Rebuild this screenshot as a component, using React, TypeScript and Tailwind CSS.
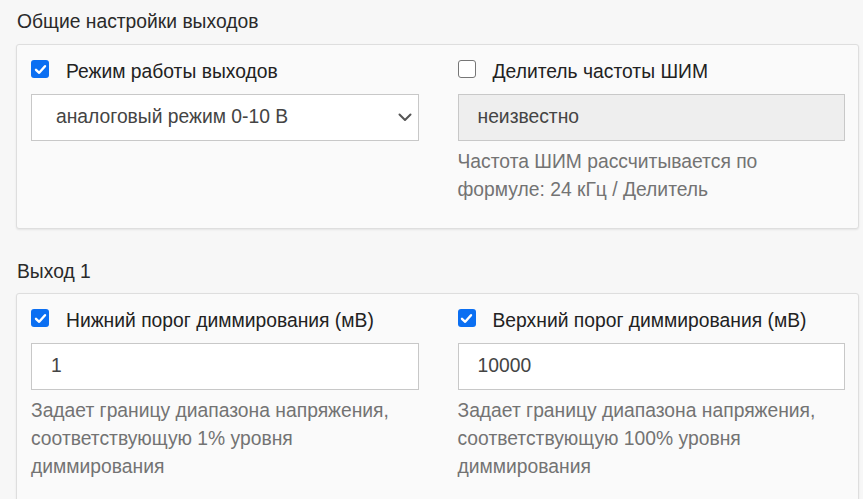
import React from "react";

function Check({ checked }: { checked: boolean }) {
  if (checked) {
    return (
      <div className="w-[18px] h-[18px] mt-[1px] rounded-[3px] bg-[#0b6ff2] flex items-center justify-center shrink-0">
        <svg width="13" height="13" viewBox="0 0 13 13" fill="none">
          <path d="M2 6.8 L5.2 9.8 L11 3.2" stroke="#fff" strokeWidth="2.4" strokeLinecap="round" strokeLinejoin="round" />
        </svg>
      </div>
    );
  }
  return <div className="w-[18px] h-[18px] mt-[1px] rounded-[3px] border-[1.5px] border-[#767676] bg-white shrink-0" />;
}

function Field({
  checked,
  label,
  children,
  help,
}: {
  checked: boolean;
  label: string;
  children: React.ReactNode;
  help?: React.ReactNode;
}) {
  return (
    <div className="flex flex-col">
      <div className="flex items-start h-[27px]">
        <Check checked={checked} />
        <span className="ml-[17px] text-[#222] leading-[27px] -mt-[1px] whitespace-nowrap">{label}</span>
      </div>
      <div className="mt-[8px]">{children}</div>
      {help && <div className="mt-[7px] text-[#737373] leading-[28px] whitespace-nowrap">{help}</div>}
    </div>
  );
}

function TextBox({ value, disabled }: { value: string; disabled?: boolean }) {
  return (
    <div
      className={
        "h-[47px] border border-[#c8c8c8] flex items-center pl-[19px] text-[#444] " +
        (disabled ? "bg-[#eeeeee]" : "bg-white")
      }
    >
      {value}
    </div>
  );
}

function SelectBox({ value }: { value: string }) {
  return (
    <div className="h-[47px] border border-[#c8c8c8] bg-white flex items-center pl-[24px] pr-[6px] text-[#444]">
      <span className="flex-1 whitespace-nowrap">{value}</span>
      <svg width="14" height="9" viewBox="0 0 14 9" fill="none">
        <path d="M1.5 1.5 L7 7 L12.5 1.5" stroke="#555" strokeWidth="2" strokeLinecap="round" strokeLinejoin="round" />
      </svg>
    </div>
  );
}

export default function App() {
  return (
    <div
      className="w-[863px] h-[499px] overflow-hidden bg-[#f7f7f7] pl-[16px] text-[19.3px]"
      style={{ fontFamily: '"Liberation Sans", Arial, sans-serif' }}
    >
      <div className="pt-[8px] leading-[27px] text-[#2a2a2a] mb-[9px] pl-[1px]">Общие настройки выходов</div>
      <div className="w-[843px] border border-[#dedede] rounded-[3px] bg-[#fafafa] shadow-[0_1px_2px_rgba(0,0,0,0.08)] pl-[14px] pr-[13px] pt-[14px] pb-[24px]">
        <div className="grid grid-cols-2 gap-x-[39px]">
          <Field checked label="Режим работы выходов">
            <SelectBox value="аналоговый режим 0-10 В" />
          </Field>
          <Field
            checked={false}
            label="Делитель частоты ШИМ"
            help={
              <>
                Частота ШИМ рассчитывается по
                <br />
                формуле: 24 кГц / Делитель
              </>
            }
          >
            <TextBox value="неизвестно" disabled />
          </Field>
        </div>
      </div>
      <div className="mt-[29px] leading-[27px] text-[#2a2a2a] mb-[8px] pl-[1px]">Выход 1</div>
      <div className="w-[843px] border border-[#dedede] rounded-[3px] bg-[#fafafa] shadow-[0_1px_2px_rgba(0,0,0,0.08)] pl-[14px] pr-[13px] pt-[14px] pb-[24px]">
        <div className="grid grid-cols-2 gap-x-[39px]">
          <Field
            checked
            label="Нижний порог диммирования (мВ)"
            help={
              <>
                Задает границу диапазона напряжения,
                <br />
                соответствующую 1% уровня
                <br />
                диммирования
              </>
            }
          >
            <TextBox value="1" />
          </Field>
          <Field
            checked
            label="Верхний порог диммирования (мВ)"
            help={
              <>
                Задает границу диапазона напряжения,
                <br />
                соответствующую 100% уровня
                <br />
                диммирования
              </>
            }
          >
            <TextBox value="10000" />
          </Field>
        </div>
      </div>
    </div>
  );
}
